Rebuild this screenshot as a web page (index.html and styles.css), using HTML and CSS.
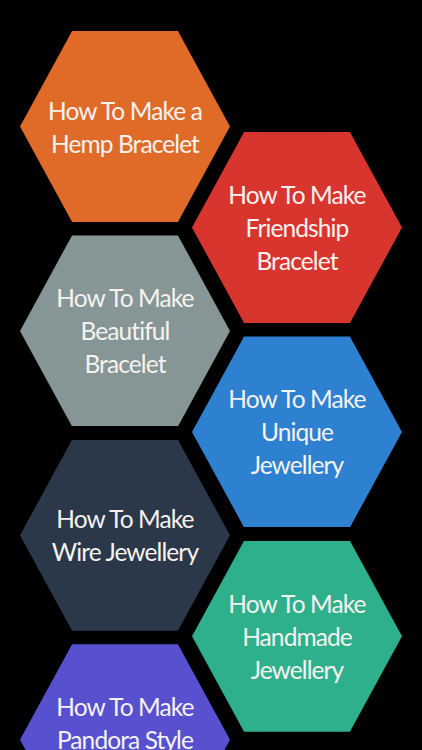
FILE: index.html
```html
<!DOCTYPE html>
<html lang="en">
<head>
<meta charset="utf-8">
<title>How To Make Bracelets</title>
<link rel="stylesheet" href="styles.css">
</head>
<body>
<div class="screen">
  <div class="col col-left">
    <div class="hex orange"><span class="label">How To Make a<br>Hemp Bracelet</span></div>
    <div class="hex gray"><span class="label">How To Make<br>Beautiful<br>Bracelet</span></div>
    <div class="hex dark"><span class="label">How To Make<br>Wire Jewellery</span></div>
    <div class="hex purple"><span class="label">How To Make<br>Pandora Style<br>Bracelet</span></div>
  </div>
  <div class="col col-right">
    <div class="hex red"><span class="label">How To Make<br>Friendship<br>Bracelet</span></div>
    <div class="hex blue"><span class="label">How To Make<br>Unique<br>Jewellery</span></div>
    <div class="hex green"><span class="label">How To Make<br>Handmade<br>Jewellery</span></div>
  </div>
</div>
</body>
</html>
```
FILE: styles.css
```css
html, body {
  margin: 0;
  padding: 0;
  background: #000;
  overflow: hidden;
}

.screen {
  width: 422px;
  height: 750px;
  box-sizing: border-box;
  padding-left: 20px;
  display: flex;
  overflow: hidden;
}

.col {
  flex: none;
  width: 210px;
  display: flex;
  flex-direction: column;
  gap: 13.4px;
}

.col-left {
  padding-top: 31px;
}

.col-right {
  padding-top: 132px;
  margin-left: -38px;
}

.hex {
  flex: none;
  height: 191px;
  clip-path: polygon(24.8% 0, 75.2% 0, 100% 50%, 75.2% 100%, 24.8% 100%, 0 50%);
  display: flex;
  align-items: center;
  justify-content: center;
  text-align: center;
  color: #f6f3ef;
  font-family: Lato, "Open Sans", sans-serif;
  font-size: 24.5px;
  line-height: 33px;
  letter-spacing: -0.9px;
}

.label {
  display: block;
}

.orange { background: #e06b28; }
.red    { background: #d9352f; }
.gray   { background: #869696; }
.blue   { background: #2e80d0; }
.dark   { background: #2b384a; }
.green  { background: #2fb08c; }
.purple { background: #5751d0; }
```
